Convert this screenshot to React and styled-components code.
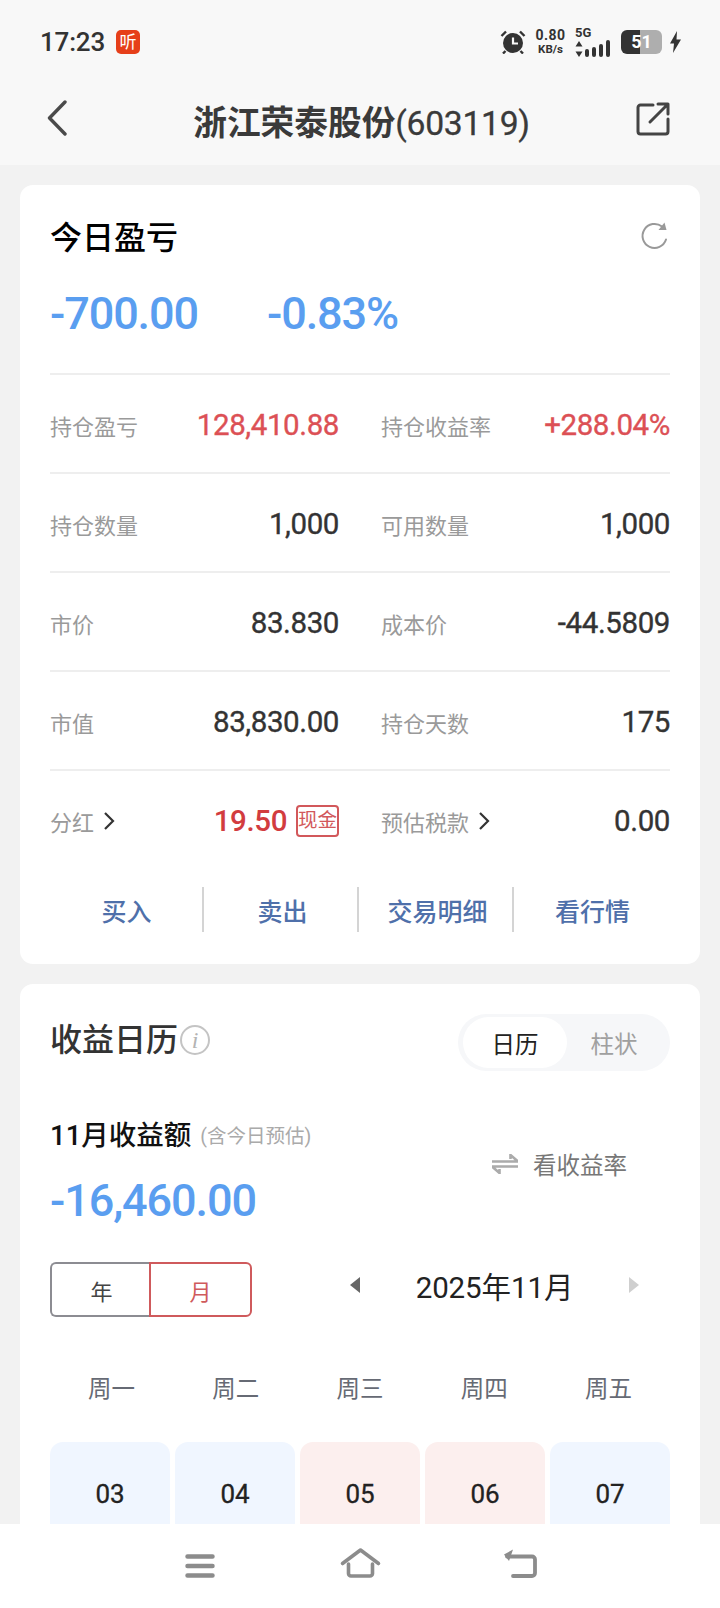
import React from 'react';
import styled, { createGlobalStyle } from 'styled-components';

const GlobalStyle = createGlobalStyle`
  html, body {
    margin: 0;
    padding: 0;
    background: #f2f2f2;
  }
  body {
    font-family: Roboto, 'Noto Sans CJK SC', sans-serif;
    color: #333;
  }
`;

const Screen = styled.div`
  width: 720px;
  height: 1608px;
  display: flex;
  flex-direction: column;
  overflow: hidden;
  background: #f2f2f2;
`;

const TopArea = styled.header`
  background: #f8f8f8;
  flex: none;
`;

const StatusBar = styled.div`
  height: 75px;
  box-sizing: border-box;
  padding: 9px 39px 0 40px;
  display: flex;
  align-items: center;
  justify-content: space-between;
`;

const StatusGroup = styled.div`
  display: flex;
  align-items: center;
  gap: ${({ $gap }) => $gap || 0}px;
`;

const Clock = styled.span`
  font-size: 26px;
  font-weight: 500;
  color: #333;
  letter-spacing: -0.2px;
`;

const AppBadge = styled.span`
  width: 24px;
  height: 24px;
  border-radius: 5px;
  background: #e63f1a;
  color: #fff;
  font-size: 17px;
  line-height: 24px;
  text-align: center;
`;

const NetSpeed = styled.div`
  display: flex;
  flex-direction: column;
  align-items: center;
  width: 33px;
  font-weight: 700;
  color: #333;
`;

const NetTop = styled.span`
  font-size: 14px;
  line-height: 15px;
  letter-spacing: 0.4px;
`;

const NetBottom = styled.span`
  font-size: 11.5px;
  line-height: 13px;
`;

const SignalBox = styled.div`
  width: 38px;
  display: flex;
  flex-direction: column;
  font-weight: 700;
  color: #333;
`;

const SignalLabel = styled.span`
  font-size: 13px;
  line-height: 14px;
`;

const Battery = styled.div`
  width: 41px;
  height: 24px;
  border-radius: 6px;
  background: linear-gradient(90deg, #333 0 47%, #aeaeae 47% 100%);
  color: #fff;
  font-size: 18px;
  font-weight: 700;
  line-height: 24px;
  text-align: center;
`;

const NavBar = styled.div`
  height: 90px;
  box-sizing: border-box;
  padding: 0 50px 5px 47px;
  display: grid;
  grid-template-columns: 1fr auto 1fr;
  align-items: center;
`;

const NavSide = styled.div`
  display: flex;
  justify-content: ${({ $end }) => ($end ? 'flex-end' : 'flex-start')};
  padding-top: ${({ $end }) => ($end ? 2 : 0)}px;
`;

const NavTitle = styled.h1`
  margin: 12px 0 0 6px;
  font-size: 33.7px;
  line-height: 44px;
  font-weight: 700;
  color: #3a3a3a;
  white-space: nowrap;
`;

const NavCode = styled.span`
  font-weight: 400;
  letter-spacing: -0.3px;
  -webkit-text-stroke: 0.3px #3a3a3a;
`;

const Content = styled.main`
  flex: 1;
  min-height: 0;
  overflow: hidden;
  padding: 20px 20px 0;
  display: flex;
  flex-direction: column;
  gap: 20px;
`;

const Card = styled.section`
  background: #fff;
  border-radius: 13px;
  padding: ${({ $top }) => $top}px 30px ${({ $bottom }) => $bottom}px;
  flex: none;
`;

const CardHead = styled.div`
  display: flex;
  align-items: center;
  justify-content: space-between;
`;

const CardTitle = styled.h2`
  margin: 0 0 ${({ $lift }) => $lift || 0}px;
  font-size: 32px;
  line-height: 40px;
  font-weight: 500;
  color: ${({ $dark }) => ($dark ? '#000' : '#333')};
  display: flex;
  align-items: center;
  gap: 2px;
`;

const Today = styled.div`
  display: flex;
  gap: 69px;
  margin-top: 26px;
  margin-bottom: 29px;
`;

const BigNumber = styled.span`
  font-size: 45px;
  line-height: 60px;
  font-weight: 500;
  color: #5a9ef0;
  letter-spacing: -1.1px;
  white-space: nowrap;
`;

const StatRow = styled.div`
  height: 99px;
  box-sizing: border-box;
  border-top: 2px solid #eeeeee;
  padding-top: 3px;
  display: grid;
  grid-template-columns: 1fr 1fr;
  column-gap: 42px;
`;

const Stat = styled.div`
  display: flex;
  align-items: center;
  justify-content: space-between;
`;

const StatLabel = styled.span`
  font-size: 22px;
  color: #9a9a9a;
  display: flex;
  align-items: center;
  gap: 9px;
`;

const StatValue = styled.span`
  font-size: 29.5px;
  color: ${({ $color }) => $color || '#333'};
  font-weight: ${({ $bold }) => ($bold ? 500 : 400)};
  -webkit-text-stroke: ${({ $bold }) => ($bold ? 0 : 0.35)}px;
  letter-spacing: -0.4px;
  display: flex;
  align-items: center;
  gap: 9px;
  white-space: nowrap;
`;

const CashTag = styled.span`
  box-sizing: border-box;
  width: 43px;
  height: 32px;
  border: 2px solid #d2585b;
  border-radius: 4px;
  color: #d2585b;
  font-size: 19.5px;
  font-weight: 400;
  line-height: 27px;
  letter-spacing: 0;
  text-align: center;
  white-space: nowrap;
  overflow: hidden;
`;

const Actions = styled.div`
  display: grid;
  grid-template-columns: repeat(4, 155px);
  margin: 19px 0 0 -3px;
`;

const ActionLink = styled.div`
  height: 45px;
  padding-left: 4px;
  display: flex;
  align-items: center;
  justify-content: center;
  font-size: 25px;
  font-weight: 500;
  color: #4f70aa;
  & + & {
    border-left: 2px solid #d4d4d4;
  }
`;

const Toggle = styled.div`
  box-sizing: border-box;
  width: 212px;
  height: 57px;
  padding: 3px 9px 3px 5px;
  border-radius: 29px;
  background: #f6f7f9;
  display: grid;
  grid-template-columns: 104px 1fr;
`;

const ToggleItem = styled.div`
  border-radius: 26px;
  background: ${({ $active }) => ($active ? '#fff' : 'transparent')};
  color: ${({ $active }) => ($active ? '#222' : '#a0a0a0')};
  font-size: 23.5px;
  display: flex;
  align-items: center;
  justify-content: center;
`;

const InfoMark = styled.span`
  box-sizing: border-box;
  width: 30px;
  height: 30px;
  border: 2px solid #c4c4c4;
  border-radius: 50%;
  color: #b4b4b4;
  font-family: 'Liberation Serif', serif;
  font-style: italic;
  font-size: 24px;
  font-weight: 400;
  line-height: 26px;
  text-align: center;
`;

const Summary = styled.div`
  display: flex;
  justify-content: space-between;
  align-items: center;
  margin-top: 45px;
  padding-right: 43px;
`;

const SummaryText = styled.div`
  display: flex;
  flex-direction: column;
  gap: 16px;
`;

const SummaryTitle = styled.div`
  font-size: 27.5px;
  line-height: 36px;
  font-weight: 500;
  color: #111;
  display: flex;
  align-items: center;
  gap: 9px;
`;

const SummaryNote = styled.span`
  font-size: 19.5px;
  font-weight: 400;
  color: #aaa;
  padding-top: 3px;
`;

const RateSwitch = styled.div`
  display: flex;
  align-items: center;
  gap: 15px;
  font-size: 23.5px;
  color: #777;
  margin-bottom: 20px;
`;

const PeriodRow = styled.div`
  display: flex;
  align-items: center;
  justify-content: space-between;
  margin-top: 31px;
  padding-right: 31px;
`;

const Segment = styled.div`
  display: grid;
  grid-template-columns: 101px 101px;
  height: 55px;
`;

const SegmentItem = styled.div`
  box-sizing: border-box;
  border: 2px solid ${({ $active }) => ($active ? '#cf5a5c' : '#8c8c92')};
  border-radius: ${({ $active }) => ($active ? '0 6px 6px 0' : '6px 0 0 6px')};
  margin-left: ${({ $active }) => ($active ? '-2px' : '0')};
  border-right-width: ${({ $active }) => ($active ? '2px' : '0')};
  color: ${({ $active }) => ($active ? '#cf5a5c' : '#444')};
  font-size: 22px;
  display: flex;
  align-items: center;
  justify-content: center;
`;

const MonthNav = styled.div`
  width: 289px;
  display: flex;
  align-items: center;
  justify-content: space-between;
  margin-bottom: 9px;
`;

const MonthLabel = styled.span`
  font-size: 29.5px;
  font-weight: 400;
  color: #222;
  letter-spacing: -0.1px;
`;

const Triangle = styled.span`
  width: 0;
  height: 0;
  border-top: 8px solid transparent;
  border-bottom: 8px solid transparent;
  ${({ $right }) =>
    $right
      ? 'border-left: 10px solid #cfcfcf;'
      : 'border-right: 10px solid #666;'}
`;

const WeekGrid = styled.div`
  display: grid;
  grid-template-columns: repeat(5, 1fr);
  column-gap: 5px;
  margin-top: 52px;
  padding: 0 2px;
`;

const WeekDay = styled.div`
  height: 40px;
  line-height: 40px;
  text-align: center;
  font-size: 23.5px;
  color: #666a74;
`;

const DayGrid = styled(WeekGrid)`
  margin-top: 33px;
  padding: 0;
`;

const DayCell = styled.div`
  height: 130px;
  box-sizing: border-box;
  padding-top: 34px;
  border-radius: 13px 13px 0 0;
  background: ${({ $up }) => ($up ? '#fcefee' : '#f0f6ff')};
  text-align: center;
  font-size: 26px;
  -webkit-text-stroke: 0.3px;
  line-height: 36px;
  color: #222;
`;

const BottomBar = styled.nav`
  flex: none;
  height: 84px;
  background: #fff;
  display: grid;
  grid-template-columns: 30px 40px 34px;
  justify-content: center;
  column-gap: 124px;
  align-items: end;
  padding: 0 0 30px 2px;
  box-sizing: border-box;
`;

const AlarmIcon = () => (
  <svg width="26" height="24" viewBox="0 0 26 24">
    <circle cx="13" cy="13" r="10" fill="#333" />
    <path d="M13 7.5V13.5H18" fill="none" stroke="#f8f8f8" strokeWidth="2.2" />
    <path d="M1.5 6 6 1.5M24.5 6 20 1.5M5.5 21l-2.5 2.5M20.5 21l2.5 2.5" stroke="#333" strokeWidth="2.4" />
  </svg>
);

const SignalIcon = () => (
  <svg width="38" height="18" viewBox="0 0 38 18">
    <path d="M4 1 7.5 6.5H.5zM4 17 .5 11.500h7z" fill="#333" />
    <rect x="10" y="9" width="4" height="8" rx="2" fill="#333" />
    <rect x="17" y="7" width="4" height="10" rx="2" fill="#333" />
    <rect x="24" y="4" width="4" height="13" rx="2" fill="#333" />
    <rect x="31" y="0" width="4" height="17" rx="2" fill="#333" />
  </svg>
);

const BoltIcon = () => (
  <svg width="11" height="22" viewBox="0 0 11 22">
    <path d="M7 0 0 12.5h4L3 22l8-13.5H6.5z" fill="#333" />
  </svg>
);

const BackIcon = () => (
  <svg width="20" height="36" viewBox="0 0 20 36">
    <path d="M18 2 2.5 18 18 34" fill="none" stroke="#4a4a4a" strokeWidth="3.4" strokeLinecap="round" strokeLinejoin="round" />
  </svg>
);

const ShareIcon = () => (
  <svg width="34" height="34" viewBox="0 0 34 34">
    <path d="M17 3H4.5A2.5 2.5 0 0 0 2 5.5V29.5A2.5 2.5 0 0 0 4.5 32H29.5A2.5 2.5 0 0 0 32 29.5V17" fill="none" stroke="#444" strokeWidth="3" strokeLinecap="round" />
    <path d="M14 20 31.5 2.5M22 2H32V12" fill="none" stroke="#444" strokeWidth="3" strokeLinecap="round" strokeLinejoin="round" />
  </svg>
);

const RefreshIcon = () => (
  <svg width="28" height="28" viewBox="1 2 28 28" overflow="visible">
    <path d="M25 17.5A12 12 0 1 1 21 4.5" fill="none" stroke="#999" strokeWidth="2" strokeLinecap="round" />
    <path d="M23.5 0.5 25.5 8 17.5 8z" fill="#999" />
  </svg>
);

const ChevronIcon = () => (
  <svg width="12" height="20" viewBox="0 0 12 20">
    <path d="M2 2 10 10 2 18" fill="none" stroke="#333" strokeWidth="2.2" />
  </svg>
);

const SwapIcon = () => (
  <svg width="26" height="20" viewBox="0 0 26 20">
    <path d="M0 7.5H26L18.5 1v4" fill="none" stroke="#ababab" strokeWidth="2.6" />
    <path d="M26 12.5H0L7.5 19v-4" fill="none" stroke="#ababab" strokeWidth="2.6" />
  </svg>
);

const MenuIcon = () => (
  <svg width="30" height="24" viewBox="0 0 30 24" display="block">
    <path d="M2.5 2.5H27.5M2.5 12H27.5M2.5 21.5H27.5" stroke="#8c8c8c" strokeWidth="4.5" strokeLinecap="round" />
  </svg>
);

const HomeIcon = () => (
  <svg width="40" height="30" viewBox="-1.5 0 40 30" display="block" overflow="visible">
    <path d="M2 15.5 20 2 38 15.5" fill="none" stroke="#8c8c8c" strokeWidth="3.6" strokeLinecap="round" strokeLinejoin="round" />
    <path d="M8 16V25.5A2.5 2.5 0 0 0 10.5 28H29.5A2.5 2.5 0 0 0 32 25.5V16" fill="none" stroke="#8c8c8c" strokeWidth="3.6" strokeLinecap="round" />
  </svg>
);

const ReturnIcon = () => (
  <svg width="34" height="30" viewBox="0 0 34 30" display="block">
    <path d="M4 8.5H29A3 3 0 0 1 32 11.5V25A3 3 0 0 1 29 28H10" fill="none" stroke="#8c8c8c" strokeWidth="3.8" strokeLinecap="round" />
    <path d="M10 1.5 1 6.5 6 13z" fill="#8c8c8c" />
  </svg>
);

const stats = [
  [
    { label: '持仓盈亏', value: '128,410.88', color: '#dc5055' },
    { label: '持仓收益率', value: '+288.04%', color: '#dc5055' },
  ],
  [
    { label: '持仓数量', value: '1,000' },
    { label: '可用数量', value: '1,000' },
  ],
  [
    { label: '市价', value: '83.830' },
    { label: '成本价', value: '-44.5809' },
  ],
  [
    { label: '市值', value: '83,830.00' },
    { label: '持仓天数', value: '175' },
  ],
];

const actions = ['买入', '卖出', '交易明细', '看行情'];
const weekDays = ['周一', '周二', '周三', '周四', '周五'];
const days = [
  { day: '03' },
  { day: '04' },
  { day: '05', up: true },
  { day: '06', up: true },
  { day: '07' },
];

const App = () => (
  <>
    <GlobalStyle />
    <Screen>
      <TopArea>
        <StatusBar>
          <StatusGroup $gap={11}>
            <Clock>17:23</Clock>
            <AppBadge>听</AppBadge>
          </StatusGroup>
          <StatusGroup $gap={8}>
            <AlarmIcon />
            <NetSpeed>
              <NetTop>0.80</NetTop>
              <NetBottom>KB/s</NetBottom>
            </NetSpeed>
            <SignalBox>
              <SignalLabel>5G</SignalLabel>
              <SignalIcon />
            </SignalBox>
            <Battery>51</Battery>
            <BoltIcon />
          </StatusGroup>
        </StatusBar>
        <NavBar>
          <NavSide>
            <BackIcon />
          </NavSide>
          <NavTitle>
            浙江荣泰股份<NavCode>(603119)</NavCode>
          </NavTitle>
          <NavSide $end>
            <ShareIcon />
          </NavSide>
        </NavBar>
      </TopArea>

      <Content>
        <Card $top={33} $bottom={32}>
          <CardHead>
            <CardTitle $dark>今日盈亏</CardTitle>
            <RefreshIcon />
          </CardHead>
          <Today>
            <BigNumber>-700.00</BigNumber>
            <BigNumber>-0.83%</BigNumber>
          </Today>
          {stats.map((row) => (
            <StatRow key={row[0].label}>
              {row.map((item) => (
                <Stat key={item.label}>
                  <StatLabel>{item.label}</StatLabel>
                  <StatValue $color={item.color}>{item.value}</StatValue>
                </Stat>
              ))}
            </StatRow>
          ))}
          <StatRow>
            <Stat>
              <StatLabel>
                分红 <ChevronIcon />
              </StatLabel>
              <StatValue $color="#d23c3f" $bold>
                19.50 <CashTag>现金</CashTag>
              </StatValue>
            </Stat>
            <Stat>
              <StatLabel>
                预估税款 <ChevronIcon />
              </StatLabel>
              <StatValue>0.00</StatValue>
            </Stat>
          </StatRow>
          <Actions>
            {actions.map((name) => (
              <ActionLink key={name}>{name}</ActionLink>
            ))}
          </Actions>
        </Card>

        <Card $top={30} $bottom={0}>
          <CardHead>
            <CardTitle $lift={6}>
              收益日历
              <InfoMark>i</InfoMark>
            </CardTitle>
            <Toggle>
              <ToggleItem $active>日历</ToggleItem>
              <ToggleItem>柱状</ToggleItem>
            </Toggle>
          </CardHead>
          <Summary>
            <SummaryText>
              <SummaryTitle>
                11月收益额
                <SummaryNote>(含今日预估)</SummaryNote>
              </SummaryTitle>
              <BigNumber>-16,460.00</BigNumber>
            </SummaryText>
            <RateSwitch>
              <SwapIcon />
              看收益率
            </RateSwitch>
          </Summary>
          <PeriodRow>
            <Segment>
              <SegmentItem>年</SegmentItem>
              <SegmentItem $active>月</SegmentItem>
            </Segment>
            <MonthNav>
              <Triangle />
              <MonthLabel>2025年11月</MonthLabel>
              <Triangle $right />
            </MonthNav>
          </PeriodRow>
          <WeekGrid>
            {weekDays.map((name) => (
              <WeekDay key={name}>{name}</WeekDay>
            ))}
          </WeekGrid>
          <DayGrid>
            {days.map((item) => (
              <DayCell key={item.day} $up={item.up}>
                {item.day}
              </DayCell>
            ))}
          </DayGrid>
        </Card>
      </Content>

      <BottomBar>
        <MenuIcon />
        <HomeIcon />
        <ReturnIcon />
      </BottomBar>
    </Screen>
  </>
);

export default App;
